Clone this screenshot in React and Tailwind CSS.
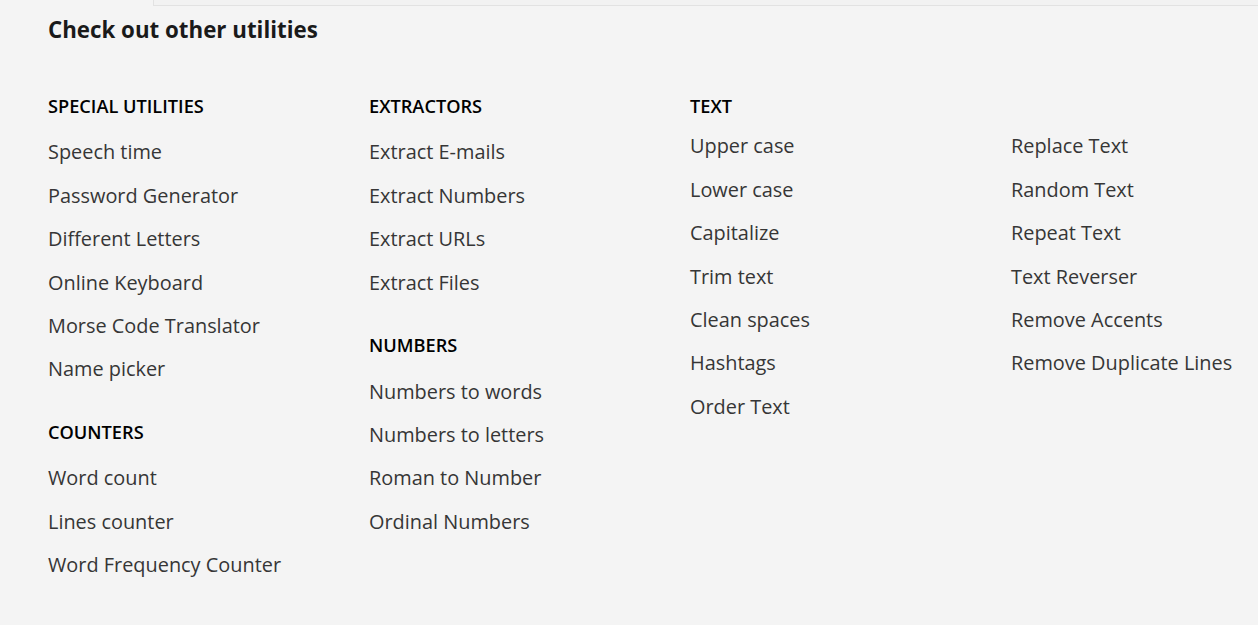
const special = ["Speech time", "Password Generator", "Different Letters", "Online Keyboard", "Morse Code Translator", "Name picker"];
const counters = ["Word count", "Lines counter", "Word Frequency Counter"];
const extractors = ["Extract E-mails", "Extract Numbers", "Extract URLs", "Extract Files"];
const numbers = ["Numbers to words", "Numbers to letters", "Roman to Number", "Ordinal Numbers"];
const textLeft = ["Upper case", "Lower case", "Capitalize", "Trim text", "Clean spaces", "Hashtags", "Order Text"];
const textRight = ["Replace Text", "Random Text", "Repeat Text", "Text Reverser", "Remove Accents", "Remove Duplicate Lines"];

function Heading({ children, className = "" }) {
  return (
    <h3 className={`text-[18.2px] leading-[24px] font-semibold text-black ${className}`}>
      {children}
    </h3>
  );
}

function LinkList({ items }) {
  return (
    <ul>
      {items.map((item) => (
        <li key={item}>
          <a href="#" className="block text-[19.9px] leading-[43.4px] text-[#363636] whitespace-nowrap">
            {item}
          </a>
        </li>
      ))}
    </ul>
  );
}

export default function App() {
  return (
    <div
      className="min-h-screen bg-[#f4f4f4] overflow-hidden"
      style={{ fontFamily: '"Open Sans", "Noto Sans", sans-serif' }}
    >
      {/* tail of the box above */}
      <div className="ml-[153px] h-[6px] border-l border-b border-[#e2e2e2] bg-[#f2f2f2]" />

      <div className="pl-[48px]">
        <h2 className="mt-[9px] text-[22.3px] leading-[30px] font-bold text-[#1a1a1a]">
          Check out other utilities
        </h2>

        <div className="mt-[49px] grid grid-cols-[321px_321px_642px]">
          <div>
            <Heading className="mb-[12.3px]">SPECIAL UTILITIES</Heading>
            <LinkList items={special} />
            <Heading className="mt-[29.3px] mb-[12.3px]">COUNTERS</Heading>
            <LinkList items={counters} />
          </div>

          <div>
            <Heading className="mb-[12.3px]">EXTRACTORS</Heading>
            <LinkList items={extractors} />
            <Heading className="mt-[29.3px] mb-[12.3px]">NUMBERS</Heading>
            <LinkList items={numbers} />
          </div>

          <div>
            <Heading className="mb-[6.3px]">TEXT</Heading>
            <div className="grid grid-cols-[321px_321px]">
              <LinkList items={textLeft} />
              <LinkList items={textRight} />
            </div>
          </div>
        </div>
      </div>
    </div>
  );
}
